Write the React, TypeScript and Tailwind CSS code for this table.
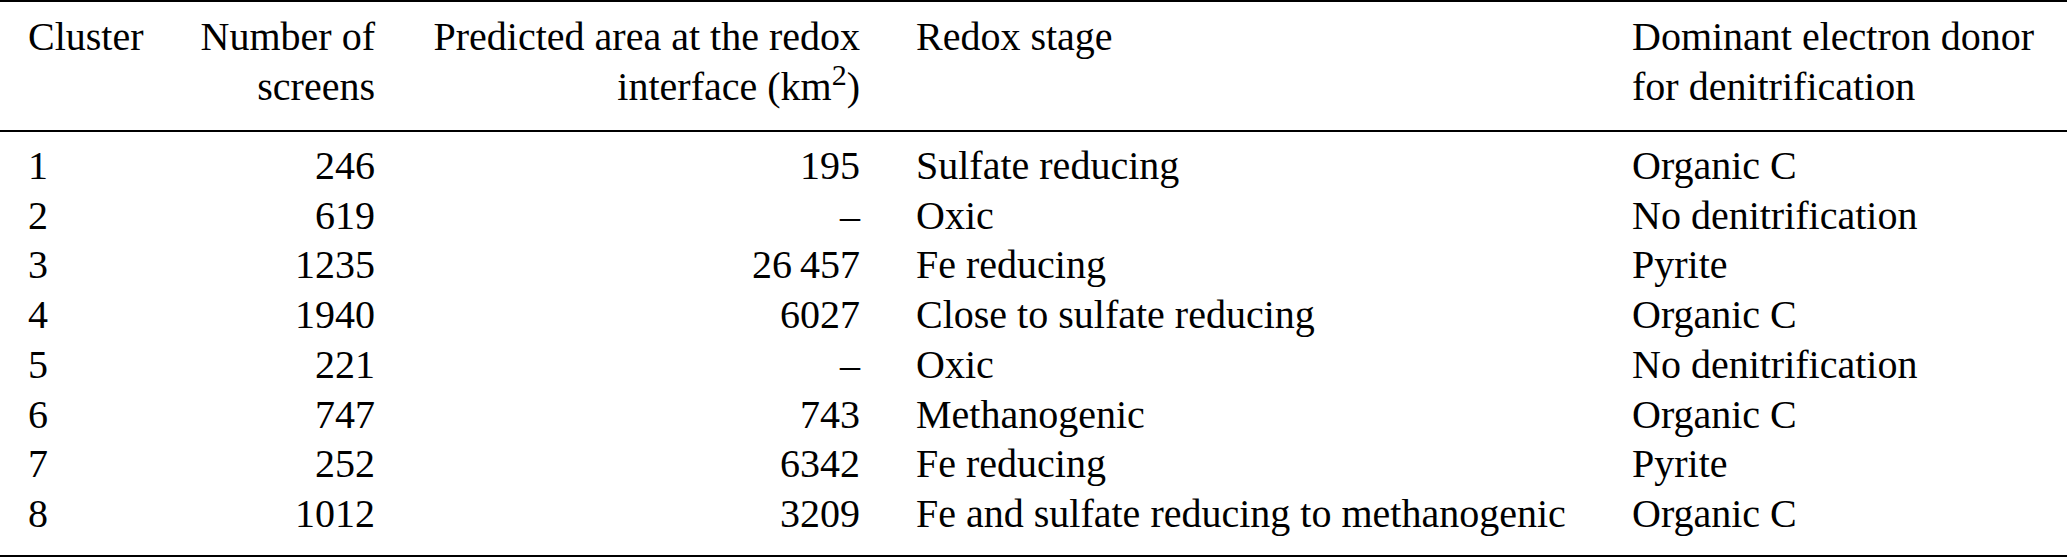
type Row = {
    cluster: string;
    screens: string;
    area: string;
    stage: string;
    donor: string;
};

const rows: Row[] = [
    { cluster: "1", screens: "246", area: "195", stage: "Sulfate reducing", donor: "Organic C" },
    { cluster: "2", screens: "619", area: "–", stage: "Oxic", donor: "No denitrification" },
    { cluster: "3", screens: "1235", area: "26\u2009457", stage: "Fe reducing", donor: "Pyrite" },
    { cluster: "4", screens: "1940", area: "6027", stage: "Close to sulfate reducing", donor: "Organic C" },
    { cluster: "5", screens: "221", area: "–", stage: "Oxic", donor: "No denitrification" },
    { cluster: "6", screens: "747", area: "743", stage: "Methanogenic", donor: "Organic C" },
    { cluster: "7", screens: "252", area: "6342", stage: "Fe reducing", donor: "Pyrite" },
    { cluster: "8", screens: "1012", area: "3209", stage: "Fe and sulfate reducing to methanogenic", donor: "Organic C" },
];

const cols = "grid grid-cols-[173px_230px_485px_716px_463px]";

export default function App() {
    return (
        <div className="h-[557px] w-[2067px] bg-white font-[family-name:'Liberation_Serif','Times_New_Roman',serif] text-[40px] text-black">
            <div className="border-y-2 border-black">
                {/* header */}
                <div className={`${cols} border-b-2 border-black pt-[10px] pb-[18px] leading-[50px]`}>
                    <div className="pl-[28px]">Cluster</div>
                    <div className="pr-[28px] text-right">
                        Number of
                        <br />
                        screens
                    </div>
                    <div className="pr-[28px] text-right">
                        Predicted area at the redox
                        <br />
                        interface (km<sup className="text-[30px]">2</sup>)
                    </div>
                    <div className="pl-[28px]">Redox stage</div>
                    <div className="pl-[28px]">
                        Dominant electron donor
                        <br />
                        for denitrification
                    </div>
                </div>

                {/* body */}
                <div className="pt-[9px] pb-[16.4px] leading-[49.7px]">
                    {rows.map((row) => (
                        <div key={row.cluster} className={`${cols} whitespace-nowrap`}>
                            <div className="pl-[28px]">{row.cluster}</div>
                            <div className="pr-[28px] text-right">{row.screens}</div>
                            <div className="pr-[28px] text-right">{row.area}</div>
                            <div className="pl-[28px]">{row.stage}</div>
                            <div className="pl-[28px]">{row.donor}</div>
                        </div>
                    ))}
                </div>
            </div>
        </div>
    );
}
